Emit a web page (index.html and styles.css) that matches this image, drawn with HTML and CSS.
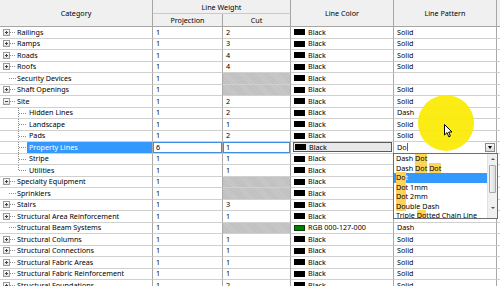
FILE: index.html
```html
<!DOCTYPE html>
<html>
<head>
<meta charset="utf-8">
<link rel="stylesheet" href="styles.css">
</head>
<body>
<div class="grid">
  <div class="head">
    <div class="h hcat">Category</div>
    <div class="h hlw">Line Weight</div>
    <div class="h hlc">Line Color</div>
    <div class="h hlp">Line Pattern</div>
    <div class="h hx"></div>
    <div class="h hproj">Projection</div>
    <div class="h hcut">Cut</div>
  </div>

  <div class="row"><div class="c cat"><span class="exp"></span><span class="conn"></span>Railings</div><div class="c">1</div><div class="c">2</div><div class="c"><span class="sw"></span>Black</div><div class="c pt">Solid</div><div class="c end"></div></div>
  <div class="row"><div class="c cat"><span class="exp"></span><span class="conn"></span>Ramps</div><div class="c">1</div><div class="c">3</div><div class="c"><span class="sw"></span>Black</div><div class="c pt">Solid</div><div class="c end"></div></div>
  <div class="row"><div class="c cat"><span class="exp"></span><span class="conn"></span>Roads</div><div class="c">1</div><div class="c">4</div><div class="c"><span class="sw"></span>Black</div><div class="c pt">Solid</div><div class="c end"></div></div>
  <div class="row"><div class="c cat"><span class="exp"></span><span class="conn"></span>Roofs</div><div class="c">1</div><div class="c">4</div><div class="c"><span class="sw"></span>Black</div><div class="c pt">Solid</div><div class="c end"></div></div>
  <div class="row"><div class="c cat"><span class="conn leaf"></span>Security Devices</div><div class="c">1</div><div class="c na"></div><div class="c"><span class="sw"></span>Black</div><div class="c pt"></div><div class="c end"></div></div>
  <div class="row"><div class="c cat"><span class="exp"></span><span class="conn"></span>Shaft Openings</div><div class="c">1</div><div class="c na"></div><div class="c"><span class="sw"></span>Black</div><div class="c pt">Solid</div><div class="c end"></div></div>
  <div class="row"><div class="c cat site"><span class="exp minus"></span><span class="conn"></span>Site</div><div class="c">1</div><div class="c">2</div><div class="c"><span class="sw"></span>Black</div><div class="c pt">Solid</div><div class="c end"></div></div>
  <div class="row"><div class="c cat child">Hidden Lines</div><div class="c">1</div><div class="c">2</div><div class="c"><span class="sw"></span>Black</div><div class="c pt">Dash</div><div class="c end"></div></div>
  <div class="row"><div class="c cat child">Landscape</div><div class="c">1</div><div class="c">1</div><div class="c"><span class="sw"></span>Black</div><div class="c pt">Solid</div><div class="c end"></div></div>
  <div class="row"><div class="c cat child">Pads</div><div class="c">1</div><div class="c">2</div><div class="c"><span class="sw"></span>Black</div><div class="c pt">Solid</div><div class="c end"></div></div>
  <div class="row edit">
    <div class="c cat child"><span class="sel">Property Lines</span></div>
    <div class="c focus">6</div>
    <div class="c focus">1</div>
    <div class="c"><span class="colorbox"><span class="sw"></span>Black</span></div>
    <div class="c pt pat">
      <span class="input">Do<span class="caret"></span></span>
      <span class="ddbtn"><span class="tri"></span></span>
      <div class="dropdown">
        <div class="list">
          <div class="item">Dash <span class="hl">Dot</span></div>
          <div class="item">Dash <span class="hl">Dot</span> <span class="hl">Dot</span></div>
          <div class="item on"><span class="hl">Do</span>t</div>
          <div class="item"><span class="hl">Do</span>t 1mm</div>
          <div class="item"><span class="hl">Do</span>t 2mm</div>
          <div class="item"><span class="hl">Do</span>uble Dash</div>
          <div class="item">Triple <span class="hl">Do</span>tted Chain Line</div>
        </div>
        <div class="sbar">
          <span class="arr up"></span>
          <span class="thumb"></span>
          <span class="arr down"></span>
        </div>
      </div>
    </div>
    <div class="c end"></div>
  </div>
  <div class="row"><div class="c cat child">Stripe</div><div class="c">1</div><div class="c">1</div><div class="c"><span class="sw"></span>Black</div><div class="c pt">Solid</div><div class="c end"></div></div>
  <div class="row"><div class="c cat child last">Utilities</div><div class="c">1</div><div class="c">1</div><div class="c"><span class="sw"></span>Black</div><div class="c pt">Solid</div><div class="c end"></div></div>
  <div class="row"><div class="c cat"><span class="exp"></span><span class="conn"></span>Specialty Equipment</div><div class="c">1</div><div class="c na"></div><div class="c"><span class="sw"></span>Black</div><div class="c pt">Solid</div><div class="c end"></div></div>
  <div class="row"><div class="c cat"><span class="conn leaf"></span>Sprinklers</div><div class="c">1</div><div class="c na"></div><div class="c"><span class="sw"></span>Black</div><div class="c pt">Solid</div><div class="c end"></div></div>
  <div class="row"><div class="c cat"><span class="exp"></span><span class="conn"></span>Stairs</div><div class="c">1</div><div class="c">3</div><div class="c"><span class="sw"></span>Black</div><div class="c pt">Solid</div><div class="c end"></div></div>
  <div class="row"><div class="c cat"><span class="exp"></span><span class="conn"></span>Structural Area Reinforcement</div><div class="c">1</div><div class="c">1</div><div class="c"><span class="sw"></span>Black</div><div class="c pt">Solid</div><div class="c end"></div></div>
  <div class="row"><div class="c cat"><span class="conn leaf"></span>Structural Beam Systems</div><div class="c">1</div><div class="c na"></div><div class="c"><span class="sw green"></span>RGB 000-127-000</div><div class="c pt">Dash</div><div class="c end"></div></div>
  <div class="row"><div class="c cat"><span class="exp"></span><span class="conn"></span>Structural Columns</div><div class="c">1</div><div class="c">1</div><div class="c"><span class="sw"></span>Black</div><div class="c pt">Solid</div><div class="c end"></div></div>
  <div class="row"><div class="c cat"><span class="exp"></span><span class="conn"></span>Structural Connections</div><div class="c">1</div><div class="c">1</div><div class="c"><span class="sw"></span>Black</div><div class="c pt">Solid</div><div class="c end"></div></div>
  <div class="row"><div class="c cat"><span class="exp"></span><span class="conn"></span>Structural Fabric Areas</div><div class="c">1</div><div class="c">1</div><div class="c"><span class="sw"></span>Black</div><div class="c pt">Solid</div><div class="c end"></div></div>
  <div class="row"><div class="c cat"><span class="exp"></span><span class="conn"></span>Structural Fabric Reinforcement</div><div class="c">1</div><div class="c">1</div><div class="c"><span class="sw"></span>Black</div><div class="c pt">Solid</div><div class="c end"></div></div>
  <div class="row"><div class="c cat"><span class="exp"></span><span class="conn"></span>Structural Foundations</div><div class="c">1</div><div class="c">2</div><div class="c"><span class="sw"></span>Black</div><div class="c pt">Solid</div><div class="c end"></div></div>

  <div class="spot"></div>
  <svg class="cursor" width="9" height="14" viewBox="0 0 9 14"><path d="M0.5 0.5 L0.5 11 L3 8.6 L4.8 12.8 L6.4 12.1 L4.7 8 L8 8 Z" fill="#fff" stroke="#000" stroke-width="1" stroke-linejoin="round"/></svg>
</div>
</body>
</html>
```

FILE: styles.css
```css
html, body {
  margin: 0;
  padding: 0;
  background: #fff;
}
body {
  font-family: "Noto Sans", "Open Sans", sans-serif;
  font-size: 7.2px;
  color: #000;
  overflow: hidden;
}
.grid {
  position: relative;
  width: 500px;
  height: 286px;
  overflow: hidden;
}
.head {
  display: grid;
  grid-template-columns: 153px 70px 68px 103px 103px 3px;
  grid-template-rows: 14px 13px;
  background: #f0f0f0;
}
.h {
  box-sizing: border-box;
  border-right: 1px solid #a6a6a6;
  border-bottom: 1px solid #a6a6a6;
  display: flex;
  align-items: center;
  justify-content: center;
  white-space: nowrap;
}
.hcat { grid-column: 1; grid-row: 1 / 3; }
.hlw { grid-column: 2 / 4; grid-row: 1; border-bottom-color: #c9c9c9; }
.hlc { grid-column: 4; grid-row: 1 / 3; }
.hlp { grid-column: 5; grid-row: 1 / 3; }
.hx { grid-column: 6; grid-row: 1 / 3; border-right: 0; }
.hproj { grid-column: 2; grid-row: 2; }
.hcut { grid-column: 3; grid-row: 2; }

.row {
  display: grid;
  grid-template-columns: 153px 70px 68px 103px 103px 3px;
  height: 11.5px;
}
.c {
  box-sizing: border-box;
  border-right: 1px solid #a9a9a9;
  border-bottom: 1px solid #d0d0d0;
  padding-left: 3px;
  display: flex;
  align-items: center;
  white-space: nowrap;
  overflow: hidden;
  line-height: 1;
}
.c.pt { padding-left: 3px; }
.c.end { border-right: 0; padding: 0; }
.na {
  background-color: #c9c9c9;
  background-image: repeating-linear-gradient(45deg, rgba(0,0,0,0.05) 0 1px, transparent 1px 2px);
}

.exp {
  box-sizing: border-box;
  width: 7px;
  height: 7px;
  border: 1px solid #9a9a9a;
  background: linear-gradient(#fbfbfb, #e2e2e2);
  position: relative;
  flex: none;
}
.exp::before {
  content: "";
  position: absolute;
  left: 1px;
  top: 2px;
  width: 3px;
  height: 1px;
  background: #444;
}
.exp::after {
  content: "";
  position: absolute;
  left: 2px;
  top: 1px;
  width: 1px;
  height: 3px;
  background: #444;
}
.exp.minus::after { display: none; }
.conn {
  flex: none;
  width: 6px;
  height: 1px;
  margin-right: 1px;
  background: repeating-linear-gradient(to right, #8c8c8c 0 1px, transparent 1px 2px);
}
.conn.leaf {
  margin-left: 6px;
  width: 7px;
}

.child {
  padding-left: 29px;
  background-image:
    repeating-linear-gradient(to bottom, #8c8c8c 0 1px, transparent 1px 2px),
    repeating-linear-gradient(to right, #8c8c8c 0 1px, transparent 1px 2px);
  background-size: 1px 100%, 8px 1px;
  background-position: 18px 0, 19px 5px;
  background-repeat: no-repeat;
}
.child.last {
  background-size: 1px 6px, 8px 1px;
}

.sw {
  flex: none;
  width: 11px;
  height: 6px;
  background: #000;
  margin-right: 3px;
}
.sw.green {
  background: #007f00;
  box-shadow: inset 0 0 0 1px #0a3d0a;
}

/* editing row */
.sel {
  align-self: stretch;
  flex: 1;
  margin-left: -2px;
  padding-left: 2px;
  background: #3399ff;
  color: #fff;
  display: flex;
  align-items: center;
}
.focus {
  box-shadow: inset 0 0 0 1px #3c8fe0;
}
.colorbox {
  flex: 1;
  box-sizing: border-box;
  height: 10px;
  margin-right: 1px;
  margin-left: -1px;
  padding-left: 1px;
  border: 1px solid #5a5a5a;
  background: #e8e8e8;
  display: flex;
  align-items: center;
}
.pat {
  position: relative;
  overflow: visible;
  z-index: 2;
}
.input {
  flex: 1;
  display: flex;
  align-items: center;
}
.caret {
  display: inline-block;
  width: 1px;
  height: 8px;
  background: #2a6fd0;
  margin-left: 0;
}
.ddbtn {
  flex: none;
  box-sizing: border-box;
  width: 10px;
  height: 9px;
  margin-right: 1px;
  border: 1px solid #8a8a8a;
  background: linear-gradient(#f6f6f6, #dcdcdc);
  display: flex;
  align-items: center;
  justify-content: center;
}
.tri {
  width: 0;
  height: 0;
  border-left: 2.5px solid transparent;
  border-right: 2.5px solid transparent;
  border-top: 3px solid #000;
}
.dropdown {
  position: absolute;
  left: -1px;
  top: 100%;
  box-sizing: border-box;
  width: 105px;
  height: 66px;
  border: 1px solid #6e6e6e;
  background: #fff;
  display: flex;
  overflow: hidden;
}
.list {
  flex: 1;
  padding-top: 0.5px;
}
.item {
  height: 9.5px;
  line-height: 9.5px;
  padding-left: 2px;
  white-space: nowrap;
}
.item.on {
  background: #3399ff;
  color: #fff;
}
.hl {
  background: #ffd35a;
  color: #000;
}
.sbar {
  flex: none;
  width: 9px;
  background: #f0f0f0;
  border-left: 1px solid #e2e2e2;
  display: flex;
  flex-direction: column;
  align-items: center;
}
.arr {
  width: 0;
  height: 0;
  border-left: 2px solid transparent;
  border-right: 2px solid transparent;
}
.arr.up {
  margin-top: 4px;
  border-bottom: 2px solid #555;
}
.arr.down {
  margin-top: 14px;
  border-top: 2px solid #555;
}
.thumb {
  box-sizing: border-box;
  width: 7px;
  height: 28px;
  margin-top: 5px;
  border: 1px solid #a8a8a8;
  border-radius: 1px;
  background: linear-gradient(to right, #f4f4f4, #dcdcdc);
}

.spot {
  position: absolute;
  left: 418px;
  top: 95px;
  width: 56px;
  height: 56px;
  border-radius: 50%;
  background: rgba(250, 234, 0, 0.92);
  z-index: 1;
}
.cursor {
  position: absolute;
  left: 444px;
  top: 124px;
  z-index: 3;
}
```
